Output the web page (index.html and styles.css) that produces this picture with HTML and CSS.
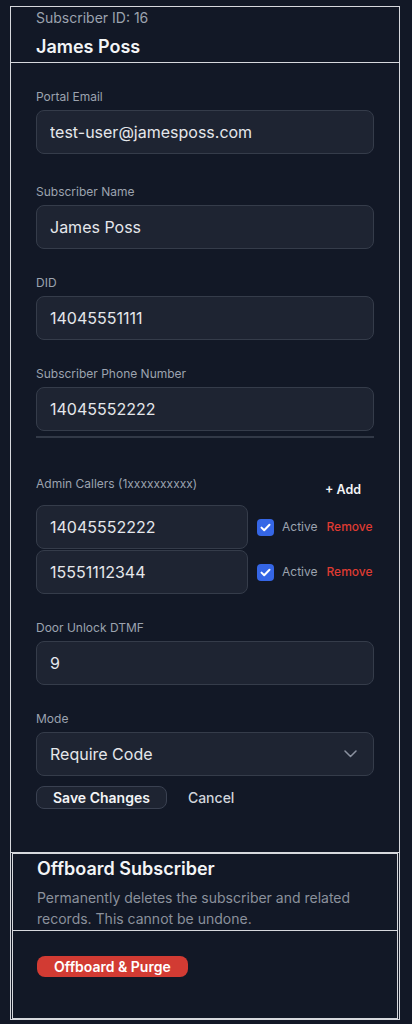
FILE: index.html
```html
<!DOCTYPE html>
<html lang="en">
<head>
<meta charset="utf-8">
<title>Subscriber</title>
<link rel="stylesheet" href="styles.css">
</head>
<body>
<div class="card">
  <div class="card-header">
    <div class="sub-id">Subscriber ID: 16</div>
    <div class="sub-name">James Poss</div>
  </div>
  <div class="card-body">
    <div class="field field-first">
      <label class="label">Portal Email</label>
      <input class="input" type="text" value="test-user@jamesposs.com">
    </div>
    <div class="field">
      <label class="label">Subscriber Name</label>
      <input class="input" type="text" value="James Poss">
    </div>
    <div class="field">
      <label class="label">DID</label>
      <input class="input" type="text" value="14045551111">
    </div>
    <div class="field">
      <label class="label">Subscriber Phone Number</label>
      <input class="input" type="text" value="14045552222">
    </div>
    <div class="divider"></div>
    <div class="admin">
      <div class="admin-head">
        <label class="label">Admin Callers (1xxxxxxxxxx)</label>
        <button class="add-btn" type="button">+ Add</button>
      </div>
      <div class="admin-rows">
        <div class="admin-row">
          <input class="input input-admin" type="text" value="14045552222">
          <span class="check"><svg width="11" height="9" viewBox="0 0 11 9"><path d="M1.5 4.6 L4.2 7.2 L9.5 1.8" fill="none" stroke="#fff" stroke-width="2" stroke-linecap="round" stroke-linejoin="round"/></svg></span>
          <span class="active">Active</span>
          <span class="remove">Remove</span>
        </div>
        <div class="admin-row">
          <input class="input input-admin" type="text" value="15551112344">
          <span class="check"><svg width="11" height="9" viewBox="0 0 11 9"><path d="M1.5 4.6 L4.2 7.2 L9.5 1.8" fill="none" stroke="#fff" stroke-width="2" stroke-linecap="round" stroke-linejoin="round"/></svg></span>
          <span class="active">Active</span>
          <span class="remove">Remove</span>
        </div>
      </div>
    </div>
    <div class="field">
      <label class="label">Door Unlock DTMF</label>
      <input class="input" type="text" value="9">
    </div>
    <div class="field">
      <label class="label">Mode</label>
      <div class="select">
        <span>Require Code</span>
        <svg width="13" height="8" viewBox="0 0 13 8"><path d="M1 1 L6.5 6.5 L12 1" fill="none" stroke="#8b92a0" stroke-width="1.5" stroke-linecap="round" stroke-linejoin="round"/></svg>
      </div>
    </div>
    <div class="actions">
      <button class="save-btn" type="button">Save Changes</button>
      <button class="cancel-btn" type="button">Cancel</button>
    </div>
  </div>
  <div class="danger">
    <div class="danger-head">
      <div class="danger-title">Offboard Subscriber</div>
      <p class="danger-desc">Permanently deletes the subscriber and related records. This cannot be undone.</p>
    </div>
    <div class="danger-body">
      <button class="purge-btn" type="button">Offboard &amp; Purge</button>
    </div>
  </div>
</div>
</body>
</html>
```
FILE: styles.css
```css
* { box-sizing: border-box; }
html, body { margin: 0; padding: 0; background: #121826; }
body {
  font-family: Inter, "Noto Sans", sans-serif;
  color: #e5e7eb;
  padding-top: 6px;
  padding-left: 10px;
}
.card {
  width: 390px;
  border: 1px solid #d6d8dd;
  background: #121826;
}
.card-header {
  padding: 1px 25px 1px;
  border-bottom: 1px solid #d6d8dd;
}
.sub-id {
  font-size: 14px;
  line-height: 20px;
  color: #9ca3af;
}
.sub-name {
  margin-top: 5px;
  font-size: 18px;
  line-height: 28px;
  font-weight: 600;
  color: #f3f4f6;
}
.card-body {
  display: flex;
  flex-direction: column;
  padding: 26px 25px 43px;
  border-bottom: 1px solid #d6d8dd;
}
.field { display: flex; flex-direction: column; margin-top: 26px; }
.field-first { margin-top: 0; margin-bottom: 4px; }
.label {
  display: block;
  font-size: 12px;
  line-height: 16px;
  color: #9ca3af;
  margin-bottom: 5px;
}
.input {
  display: block;
  width: 100%;
  height: 44px;
  padding: 0 13px;
  background: #1e2432;
  border: 1px solid #353c4a;
  border-radius: 8px;
  color: #e5e7eb;
  font-family: Inter, "Noto Sans", sans-serif;
  font-size: 16px;
  outline: none;
}
.divider {
  height: 2px;
  background: #323947;
  margin-top: 5px;
}
.admin { margin-top: 38px; }
.admin-head {
  display: flex;
  justify-content: space-between;
  align-items: flex-start;
}
.admin-head .label { margin-bottom: 0; }
.add-btn {
  background: transparent;
  border: 0;
  padding: 4px 13px 4px 0;
  font-family: Inter, "Noto Sans", sans-serif;
  font-size: 12.5px;
  line-height: 20px;
  font-weight: 600;
  color: #f3f4f6;
}
.admin-rows {
  margin-top: 1px;
  display: flex;
  flex-direction: column;
  gap: 1px;
}
.admin-row {
  display: flex;
  align-items: center;
}
.input-admin { width: 212px; flex: none; }
.check {
  flex: none;
  margin-left: 9px;
  width: 17px;
  height: 17px;
  border-radius: 4px;
  background: #3566e6;
  display: flex;
  align-items: center;
  justify-content: center;
}
.active {
  margin-left: 8px;
  font-size: 12px;
  line-height: 20px;
  color: #9ca3af;
}
.remove {
  margin-left: 9px;
  font-size: 12px;
  line-height: 20px;
  font-weight: 500;
  color: #df3b32;
}
.select {
  height: 44px;
  padding: 0 16px 0 13px;
  background: #1e2432;
  border: 1px solid #353c4a;
  border-radius: 8px;
  display: flex;
  align-items: center;
  justify-content: space-between;
  font-size: 16px;
  color: #e5e7eb;
}
.actions {
  margin-top: 10px;
  display: flex;
  align-items: center;
}
.save-btn {
  height: 23px;
  padding: 0 16px;
  background: #1e2432;
  border: 1px solid #3a4151;
  border-radius: 8px;
  font-family: Inter, "Noto Sans", sans-serif;
  font-size: 14px;
  font-weight: 600;
  color: #f3f4f6;
}
.cancel-btn {
  margin-left: 12px;
  background: transparent;
  border: 0;
  padding: 0 9px;
  font-family: Inter, "Noto Sans", sans-serif;
  font-size: 14px;
  font-weight: 500;
  color: #d1d5db;
}
.danger {
  margin: 0 1px;
  border: 1px solid #d6d8dd;
}
.danger-head {
  padding: 1px 24px 1px;
  border-bottom: 1px solid #d6d8dd;
}
.danger-title {
  font-size: 18px;
  line-height: 28px;
  font-weight: 600;
  color: #f3f4f6;
}
.danger-desc {
  margin: 4px 0 0;
  font-size: 14px;
  line-height: 21px;
  color: #8b919c;
}
.danger-body {
  padding: 25px 24px 41px;
}
.purge-btn {
  height: 21px;
  padding: 0 17px;
  border: 0;
  border-radius: 8px;
  background: #d23b33;
  font-family: Inter, "Noto Sans", sans-serif;
  font-size: 14px;
  font-weight: 600;
  color: #fff;
}
```
